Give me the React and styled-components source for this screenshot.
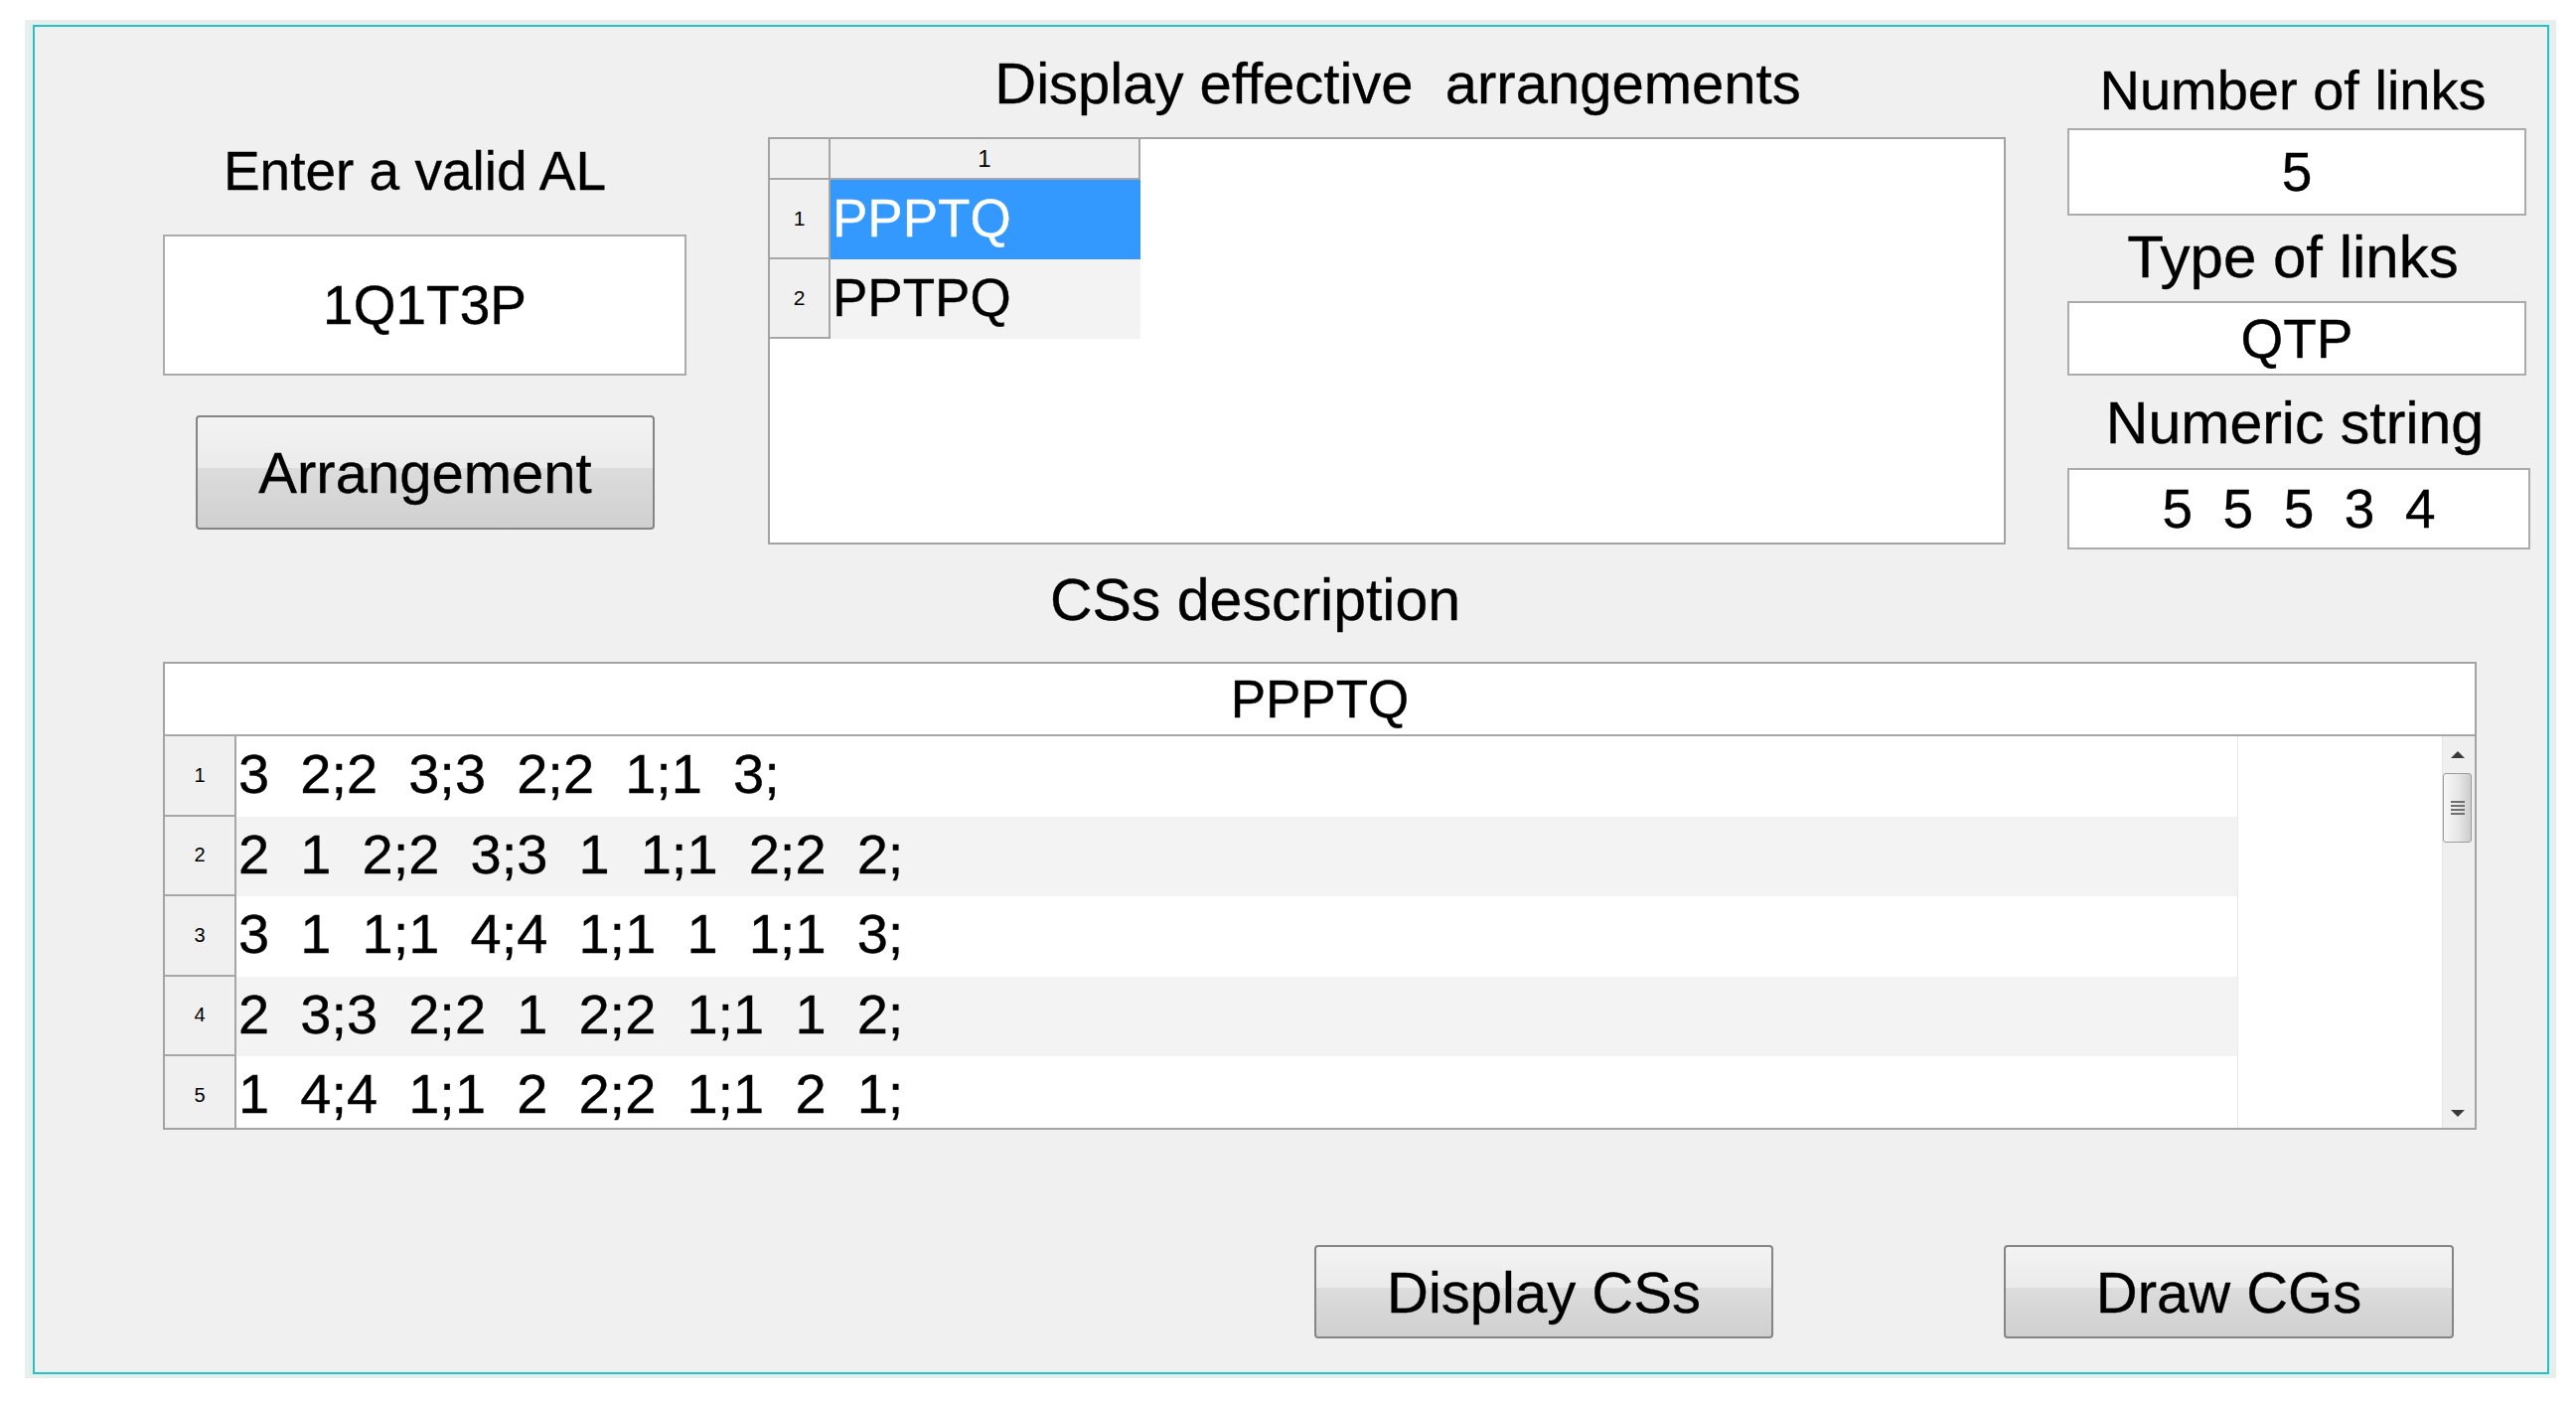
import React from 'react';
import styled, { createGlobalStyle } from 'styled-components';

const GlobalStyle = createGlobalStyle`
  * { box-sizing: border-box; }
  html, body { margin: 0; background: #fff; }
  body {
    font-family: "Liberation Sans", Arial, sans-serif;
    color: #000;
    -webkit-text-stroke: 0.35px currentColor;
  }
`;

const arrangements = ['PPPTQ', 'PPTPQ'];

const csRows = [
  '3  2;2  3;3  2;2  1;1  3;',
  '2  1  2;2  3;3  1  1;1  2;2  2;',
  '3  1  1;1  4;4  1;1  1  1;1  3;',
  '2  3;3  2;2  1  2;2  1;1  1  2;',
  '1  4;4  1;1  2  2;2  1;1  2  1;',
];

const Frame = styled.div`
  margin: 20px 0 0 25px;
  width: 2548px;
  height: 1367px;
  padding: 5px 7px 4px 8px;
  background: #e7eeee;
`;

const Panel = styled.div`
  height: 100%;
  border: 2px solid #23c2c4;
  background: #f0f0f0;
  display: flex;
  flex-direction: column;
`;

const TopSection = styled.div`
  display: flex;
  align-items: flex-start;
  padding-left: 129px;
`;

const Column = styled.div`
  display: flex;
  flex-direction: column;
  align-items: flex-start;
  width: ${(p) => p.$w}px;
  margin-left: ${(p) => p.$ml || 0}px;
`;

const Label = styled.div`
  width: 100%;
  height: ${(p) => p.$size || 55}px;
  margin-top: ${(p) => p.$mt || 0}px;
  padding-left: ${(p) => (p.$shift > 0 ? p.$shift * 2 : 0)}px;
  padding-right: ${(p) => (p.$shift < 0 ? -p.$shift * 2 : 0)}px;
  font-size: ${(p) => p.$size || 55}px;
  line-height: ${(p) => p.$size || 55}px;
  text-align: center;
  white-space: pre;
`;

const EditBox = styled.div`
  display: flex;
  align-items: center;
  justify-content: center;
  width: ${(p) => p.$w}px;
  height: ${(p) => p.$h}px;
  margin-top: ${(p) => p.$mt || 0}px;
  background: #fff;
  border: 2px solid #ababab;
  font-size: ${(p) => p.$fs || 55}px;
  white-space: pre;
`;

const PushButton = styled.button`
  display: flex;
  align-items: center;
  justify-content: center;
  width: ${(p) => p.$w}px;
  height: ${(p) => p.$h}px;
  margin: ${(p) => p.$m || 0};
  padding: 0;
  border: 2px solid #858585;
  border-radius: 4px;
  background: linear-gradient(to bottom, #f3f3f3 0%, #ebebeb 46%, #dcdcdc 46%, #d0d0d0 100%);
  font-family: "Liberation Sans", Arial, sans-serif;
  font-size: 58px;
  color: #000;
  cursor: default;
`;

/* arrangements table */

const ArrTable = styled.div`
  width: 100%;
  height: 410px;
  margin-top: 25px;
  background: #fff;
  border: 2px solid #a3a3a3;
`;

const ArrGrid = styled.div`
  display: grid;
  grid-template-columns: 61px 312px;
  grid-template-rows: 41px 80px 80px;
`;

const HeadCell = styled.div`
  display: flex;
  align-items: center;
  justify-content: center;
  background: #f0f0f0;
  border-right: 2px solid #a6a6a6;
  border-bottom: 2px solid #a6a6a6;
  font-size: ${(p) => p.$fs || 21}px;
  -webkit-text-stroke: 0;
`;

const ArrCell = styled.div`
  background: ${(p) => (p.$selected ? '#3399ff' : p.$alt ? '#f3f3f3' : '#fff')};
  color: ${(p) => (p.$selected ? '#fff' : '#000')};
  font-size: 53px;
  line-height: 77px;
  padding-left: 2px;
`;

/* CSs description */

const DescSection = styled.div`
  display: flex;
  flex-direction: column;
  padding: 0 71px 0 129px;
`;

const CsTable = styled.div`
  display: flex;
  flex-direction: column;
  height: 471px;
  margin-top: 32px;
  background: #fff;
  border: 2px solid #a3a3a3;
`;

const CsHeader = styled.div`
  height: 73px;
  border-bottom: 2px solid #a6a6a6;
  font-size: 53px;
  line-height: 71px;
  text-align: center;
`;

const CsBody = styled.div`
  flex: 1;
  min-height: 0;
  display: flex;
  overflow: hidden;
`;

const CsRows = styled.div`
  display: flex;
  flex-direction: column;
  width: 2086px;
`;

const CsRow = styled.div`
  display: flex;
  flex: none;
  height: 80.5px;
`;

const RowNum = styled.div`
  display: flex;
  align-items: center;
  justify-content: center;
  width: 72px;
  background: #f0f0f0;
  border-right: 2px solid #a6a6a6;
  border-bottom: 2px solid #a6a6a6;
  font-size: 20px;
  -webkit-text-stroke: 0;
`;

const CsCell = styled.div`
  flex: 1;
  background: ${(p) => (p.$alt ? '#f3f3f3' : '#fff')};
  font-size: 56px;
  line-height: 76px;
  padding-left: 2px;
  white-space: pre;
`;

const Filler = styled.div`
  flex: 1;
  background: #fff;
  border-left: 1px solid #e8e8e8;
`;

const ScrollBar = styled.div`
  display: flex;
  flex-direction: column;
  width: 33px;
  background: #efefef;
  border-left: 1px solid #e4e4e4;
`;

const ArrowBox = styled.div`
  display: flex;
  align-items: center;
  justify-content: center;
  height: ${(p) => p.$h}px;
  padding-right: 2px;
`;

const Thumb = styled.div`
  display: flex;
  flex-direction: column;
  align-items: center;
  justify-content: center;
  gap: 2px;
  width: 29px;
  height: 70px;
  border: 1px solid #9c9c9c;
  border-radius: 3px;
  background: linear-gradient(to right, #f7f7f7 0%, #e6e6e6 55%, #cdcdcd 100%);
`;

const Grip = styled.span`
  width: 14px;
  height: 2px;
  background: #707070;
`;

const Track = styled.div`
  flex: 1;
`;

const ButtonRow = styled.div`
  display: flex;
  gap: 232px;
  margin: 116px 0 0 1159px;
`;

const Arrow = ({ down }) => (
  <svg width="14" height="7" viewBox="0 0 14 7">
    <polygon points={down ? '0,0 14,0 7,7' : '0,7 7,0 14,7'} fill="#3a3a3a" />
  </svg>
);

export default function App() {
  return (
    <>
      <GlobalStyle />
      <Frame>
        <Panel>
          <TopSection>
            <Column $w={527}>
              <Label $mt={118} $shift={-10}>Enter a valid AL</Label>
              <EditBox $w={527} $h={142} $mt={36} $fs={55}>1Q1T3P</EditBox>
              <PushButton $w={462} $h={115} $m="40px 0 0 33px">Arrangement</PushButton>
            </Column>

            <Column $w={1246} $ml={82}>
              <Label $mt={28} $size={58} $shift={11}>Display effective  arrangements</Label>
              <ArrTable>
                <ArrGrid>
                  <HeadCell />
                  <HeadCell $fs={24}>1</HeadCell>
                  {arrangements.map((a, i) => (
                    <React.Fragment key={a}>
                      <HeadCell>{i + 1}</HeadCell>
                      <ArrCell $selected={i === 0} $alt={i % 2 === 1}>{a}</ArrCell>
                    </React.Fragment>
                  ))}
                </ArrGrid>
              </ArrTable>
            </Column>

            <Column $w={466} $ml={62}>
              <Label $mt={36} $size={56} $shift={-6}>Number of links</Label>
              <EditBox $w={462} $h={88} $mt={10}>5</EditBox>
              <Label $mt={12} $size={60} $shift={-6}>Type of links</Label>
              <EditBox $w={462} $h={75} $mt={14}>QTP</EditBox>
              <Label $mt={19} $size={59} $shift={-4}>Numeric string</Label>
              <EditBox $w={466} $h={82} $mt={15}>{'5  5  5  3  4'}</EditBox>
            </Column>
          </TopSection>

          <DescSection>
            <Label $mt={22} $size={59} $shift={-65}>CSs description</Label>
            <CsTable>
              <CsHeader>PPPTQ</CsHeader>
              <CsBody>
                <CsRows>
                  {csRows.map((r, i) => (
                    <CsRow key={i}>
                      <RowNum>{i + 1}</RowNum>
                      <CsCell $alt={i % 2 === 1}>{r}</CsCell>
                    </CsRow>
                  ))}
                </CsRows>
                <Filler />
                <ScrollBar>
                  <ArrowBox $h={37}><Arrow /></ArrowBox>
                  <Thumb>
                    <Grip />
                    <Grip />
                    <Grip />
                    <Grip />
                  </Thumb>
                  <Track />
                  <ArrowBox $h={30}><Arrow down /></ArrowBox>
                </ScrollBar>
              </CsBody>
            </CsTable>
            <ButtonRow>
              <PushButton $w={462} $h={94}>Display CSs</PushButton>
              <PushButton $w={453} $h={94}>Draw CGs</PushButton>
            </ButtonRow>
          </DescSection>
        </Panel>
      </Frame>
    </>
  );
}
